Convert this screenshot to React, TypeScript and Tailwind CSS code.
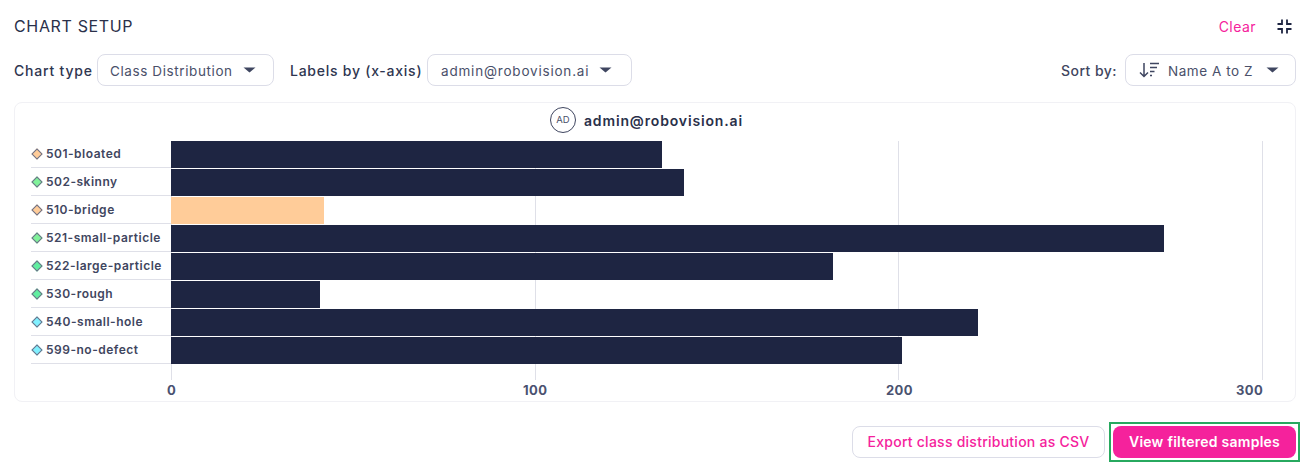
import React from "react";

const rows = [
  { name: "501-bloated", w: 491, dot: "bg-[#ffcc99]", bar: "bg-[#1e2542]" },
  { name: "502-skinny", w: 513, dot: "bg-[#80f29a]", bar: "bg-[#1e2542]" },
  { name: "510-bridge", w: 153, dot: "bg-[#ffcc99]", bar: "bg-[#ffcc99]" },
  { name: "521-small-particle", w: 993, dot: "bg-[#80f29a]", bar: "bg-[#1e2542]" },
  { name: "522-large-particle", w: 662, dot: "bg-[#60eea0]", bar: "bg-[#1e2542]" },
  { name: "530-rough", w: 149, dot: "bg-[#60eea0]", bar: "bg-[#1e2542]" },
  { name: "540-small-hole", w: 807, dot: "bg-[#80f0ff]", bar: "bg-[#1e2542]" },
  { name: "599-no-defect", w: 731, dot: "bg-[#80f0ff]", bar: "bg-[#1e2542]" },
];

function Caret() {
  return (
    <svg width="13" height="6" viewBox="0 0 13 6" className="shrink-0">
      <path d="M0.5 0.5H12.5L6.5 5.5Z" fill="#3f4660" />
    </svg>
  );
}

function Select({ w, pr, children }: { w: string; pr: string; children: React.ReactNode }) {
  return (
    <div className={`${w} ${pr} h-8 flex items-center justify-between border border-[#dcdde8] rounded-lg bg-white text-[13.5px] text-[#4a506a] pl-[12px]`}>
      {children}
    </div>
  );
}

export default function App() {
  return (
    <div className="w-[1310px] h-[472px] bg-white relative overflow-hidden font-['Inter',sans-serif]">
      <div className="px-3.5 pt-3.5">
        <div className="flex items-center justify-between h-6">
          <h2 className="text-[16px] font-normal tracking-[0.65px] text-[#2a304a]">CHART SETUP</h2>
          <div className="flex items-center gap-[21px] pr-1">
            <span className="text-[14px] tracking-[0.45px] text-[#f5229c]">Clear</span>
            <svg width="15" height="15" viewBox="0 0 15 15" fill="none" stroke="#1e2542" strokeWidth="1.8">
              <path d="M5 0.5V5H0.5M10 0.5V5H14.5M5 14.5V10H0.5M10 14.5V10H14.5" />
            </svg>
          </div>
        </div>

        <div className="flex items-center justify-between mt-4 h-8">
          <div className="flex items-center">
            <span className="text-[14px] font-medium tracking-[0.8px] text-[#2f3650] w-[83px] shrink-0">Chart type</span>
            <Select w="w-[177px]" pr="pr-[17px]">
              <span className="tracking-[0.6px] pt-[2px]">Class Distribution</span>
              <Caret />
            </Select>
            <span className="text-[14px] font-medium tracking-[0.75px] text-[#2f3650] ml-4 w-[137px] shrink-0">Labels by (x-axis)</span>
            <Select w="w-[205px]" pr="pr-[19px]">
              <span className="tracking-[0.8px] pt-[2px] ml-px">admin@robovision.ai</span>
              <Caret />
            </Select>
          </div>
          <div className="flex items-center">
            <span className="text-[14px] font-medium tracking-[0.45px] text-[#3f4660] mr-2">Sort by:</span>
            <Select w="w-[171px]" pr="pr-[16px]">
              <span className="flex items-center gap-2 ml-[1px]">
                <svg width="21" height="16" viewBox="0 0 21 16" fill="none" stroke="#3f4660" strokeWidth="1.5" className="shrink-0">
                  <path d="M5 1V14.5M1 10.5L5 14.5L9 10.5M11 1.5H20M11 5.5H18M11 9.5H15.5M11 13.5H13" />
                </svg>
                <span className="tracking-[0.55px] pt-[2px]">Name A to Z</span>
              </span>
              <Caret />
            </Select>
          </div>
        </div>

        <div className="mt-4 w-[1282px] h-[300px] border border-[#f1f1f5] rounded-lg relative">
          <div className="flex items-center justify-center gap-2 h-[32px] pt-0.5 pr-[17px]">
            <span className="w-[26px] h-[26px] rounded-full border border-[#3f4660] flex items-center justify-center text-[9.5px] text-[#4a506a]">AD</span>
            <span className="text-[14px] font-semibold tracking-[0.85px] text-[#2a304a]">admin@robovision.ai</span>
          </div>

          <div className="relative mt-[6px] ml-4">
            <div className="absolute left-[140px] top-0 w-px h-[239px] bg-[#dfe0e8]" />
            <div className="absolute left-[504px] top-0 w-px h-[239px] bg-[#dfe0e8]" />
            <div className="absolute left-[867px] top-0 w-px h-[239px] bg-[#dfe0e8]" />
            <div className="absolute left-[1231px] top-0 w-px h-[239px] bg-[#dfe0e8]" />
            {rows.map((r) => (
              <div key={r.name} className="flex h-7 relative">
                <div className="w-[140px] h-[27px] border-b border-[#dfe0e8] flex items-center gap-[5px] pl-[2px]">
                  <span className={`w-[8px] h-[8px] rotate-45 border border-[#6b7088] ${r.dot}`} />
                  <span className="text-[12px] font-semibold tracking-[0.5px] text-[#3f4660] whitespace-nowrap">{r.name}</span>
                </div>
                <div className={`h-[27px] ${r.bar}`} style={{ width: r.w }} />
              </div>
            ))}
            <div className="relative h-6 mt-[16px] text-[13px] font-bold tracking-[0.4px] text-[#4a5270]">
              <span className="absolute left-[136px] top-0">0</span>
              <span className="absolute left-[492px] top-0">100</span>
              <span className="absolute left-[855px] top-0">200</span>
              <span className="absolute left-[1205px] top-0">300</span>
            </div>
          </div>
        </div>

        <div className="flex justify-end items-center gap-1 mt-5 mr-[-4px]">
          <button className="w-[253px] h-8 border border-[#dcdde8] rounded-lg text-[14px] font-medium tracking-[0.25px] text-[#f5229c] bg-white pb-[2px]">
            Export class distribution as CSV
          </button>
          <div className="border-2 border-[#27a95f] p-[2px]">
            <button className="block w-[183px] h-8 rounded-lg text-[14px] font-semibold tracking-[0.25px] text-white bg-[#f5229c] pb-[2px]">
              View filtered samples
            </button>
          </div>
        </div>
      </div>
    </div>
  );
}
